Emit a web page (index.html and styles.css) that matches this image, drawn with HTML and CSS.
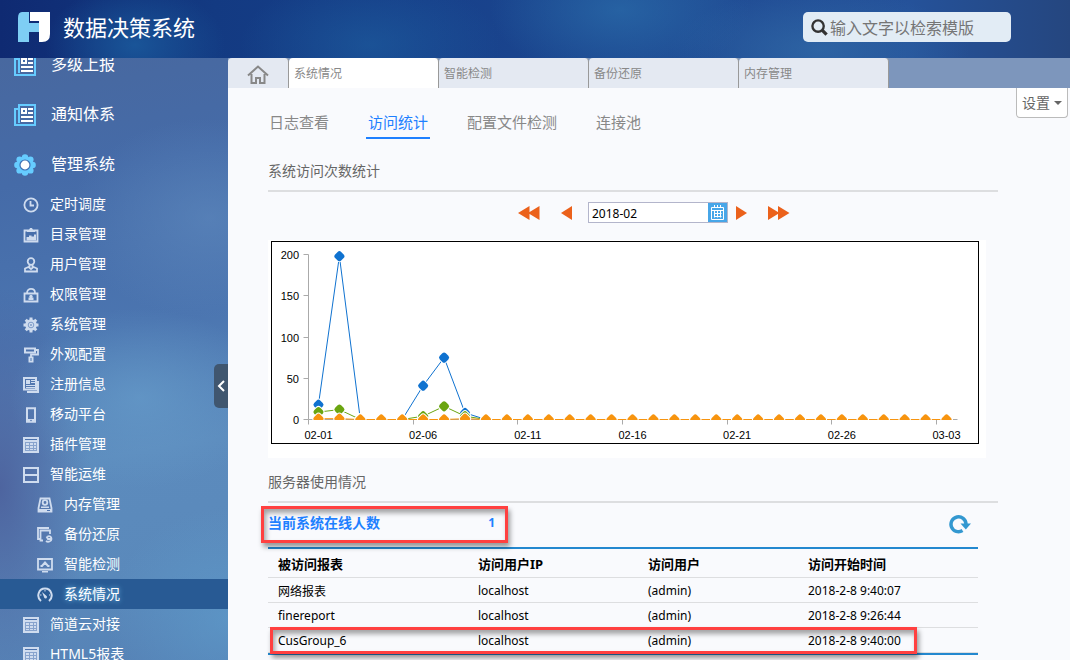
FILE: index.html
```html
<!DOCTYPE html>
<html lang="zh-CN">
<head>
  <meta charset="UTF-8">
  <meta name="viewport" content="width=device-width, initial-scale=1.0">
  <title>数据决策系统</title>
  <link rel="stylesheet" href="styles.css">
</head>
<body>
  <svg class="sprite" aria-hidden="true">
    <symbol id="i-news" viewBox="0 0 22 22">
      <path d="M5 1h16v20H1V5h4zM5 5v14" fill="none" stroke="#66ccff" stroke-width="2"/>
      <path d="M7 4h6v6H7zM14 4h5v2h-5zM14 8h5v2h-5zM7 12h12v2H7zM7 16h12v2H7z" fill="#fff"/>
      <path d="M9 6h2v2H9z" fill="#456fab"/>
    </symbol>
    <symbol id="i-flower" viewBox="0 0 22 22">
      <g fill="#66ccff">
        <circle cx="11" cy="3.400" r="3.200"/><circle cx="16.400" cy="5.600" r="3.200"/><circle cx="18.600" cy="11" r="3.200"/><circle cx="16.400" cy="16.400" r="3.200"/>
        <circle cx="11" cy="18.600" r="3.200"/><circle cx="5.600" cy="16.400" r="3.200"/><circle cx="3.400" cy="11" r="3.200"/><circle cx="5.600" cy="5.600" r="3.200"/>
        <circle cx="11" cy="11" r="7"/>
      </g>
      <circle cx="11" cy="11" r="5.600" fill="#3f70b5"/>
      <circle cx="11" cy="11" r="4.400" fill="#fff"/>
    </symbol>
    <symbol id="i-clock" viewBox="0 0 16 16">
      <circle cx="8" cy="8" r="6.600" class="line thick"/><path d="M7.500 4v4.500H11" class="line thick"/>
    </symbol>
    <symbol id="i-board" viewBox="0 0 16 16">
      <path d="M1.500 3.500h13v11h-13z" class="line thick"/><path d="M4 5V3h2l1-2h2l1 2h2v2zM3.500 10H6v3.500H3.500zM6 8.500h2.500v5H6zM8.500 9.500H11v4H8.500zM11 7.500h2v6h-2z" class="solid"/>
    </symbol>
    <symbol id="i-user" viewBox="0 0 16 16">
      <circle cx="8" cy="4.500" r="3.300" class="line thick"/><path d="M6.500 8v1.500L2 11.500v3h12v-3L9.500 9.500V8M5.500 10L8 12l2.500-2" class="line thick"/>
    </symbol>
    <symbol id="i-lock" viewBox="0 0 16 16">
      <path d="M1.500 6.500h13v8h-13zM4 6C4 .5 12 .5 12 6" class="line thick"/><circle cx="8" cy="9.500" r="1.700" class="solid"/><path d="M5.500 10.500h5V13h-5z" class="solid"/>
    </symbol>
    <symbol id="i-gear" viewBox="0 0 16 16">
      <path d="M8 .5v15M.5 8h15M2.700 2.700l10.600 10.600M13.300 2.700L2.700 13.300" class="line teeth"/><circle cx="8" cy="8" r="5.800" class="solid"/>
      <circle cx="8" cy="8" r="2.800" fill="none" stroke="#7f9cc9"/><circle cx="8" cy="8" r="1" fill="#7f9cc9"/>
    </symbol>
    <symbol id="i-roller" viewBox="0 0 16 16">
      <path d="M2 1.500h10v4H2z" class="line fat"/><path d="M12 3h3v4.500H8V10" class="line thick"/><path d="M5.500 9.500h5V15.500h-5z" class="solid"/><path d="M7.500 11h1v3h-1z" fill="#4d78b2"/>
    </symbol>
    <symbol id="i-paper" viewBox="0 0 16 16">
      <path d="M1 1h12v11.500H1z" class="line fat"/><path d="M14 4h2v12H4v-2h10z" class="solid"/><path d="M3 3h4v4H3zM8 3h4v1H8zM8 5h4v1H8zM3 8h9v1H3zM3 10h9v1H3z" class="solid"/>
    </symbol>
    <symbol id="i-phone" viewBox="0 0 16 16">
      <path d="M4 1.200h8v13.600H4z" class="line fat"/><path d="M4 12h8v3H4z" class="solid"/><circle cx="8" cy="13.500" r=".8" fill="#5278b0"/>
    </symbol>
    <symbol id="i-form" viewBox="0 0 16 16">
      <path d="M0 0h16v16H0z" class="solid"/><path d="M2 2h12v1H2z" fill="#4d73ae"/><path d="M2 5h12v9H2z" fill="#87a3cd"/><path d="M3 6h3v2H3zM7 6h3v2H7zM11 6h2v2h-2zM3 9h3v2H3zM7 9h3v2H7zM11 9h2v2h-2zM3 12h3v1H3zM7 12h3v1H7zM11 12h2v1h-2z" class="solid"/>
    </symbol>
    <symbol id="i-ops" viewBox="0 0 16 16">
      <path d="M1 1h14v14H1zM1 8h14" class="line fat"/>
    </symbol>
    <symbol id="i-disk" viewBox="0 0 16 16">
      <path d="M3.500 1.500h9l2 9.500v3.500h-13V11z" class="line thick"/><circle cx="8" cy="5.500" r="2.300" class="line thick"/><path d="M4 9.500h8V11H4zM1.500 12h13v3h-13z" class="solid"/><path d="M10 13h3v1h-3z" fill="#4d73ae"/>
    </symbol>
    <symbol id="i-copy" viewBox="0 0 16 16">
      <path d="M12 1H1v11h3" class="line thick"/><path d="M6 13.500H3.500V3.500h9.500V7" class="line thick"/><path d="M9.500 9.500l1.500 2.500h3.500M9 14c2 1.500 5.500.500 5.500-2s-2-3.500-4-2.500" class="line thick"/>
    </symbol>
    <symbol id="i-screen" viewBox="0 0 16 16">
      <path d="M1 2h14v10.500H1z" class="line thick"/><path d="M3.500 9H5l3-3.500L11 9h1.500" class="line fat"/><path d="M5 14h6v1.500H5z" class="solid"/>
    </symbol>
    <symbol id="i-gauge" viewBox="0 0 16 16">
      <path d="M4 14C-1 10 1.500 1.500 8 1.500S17 10 12 14" class="line fat"/><path d="M5 5l4 3.500a1.500 1.500 0 1 1-2 1.500z" class="solid"/><path d="M3 8h1.500M8 3v1.500M12 8h1" class="line"/>
    </symbol>
  </svg>

  <header class="header">
    <svg class="logo" viewBox="0 0 32 30" aria-hidden="true">
      <path d="M4 0h7v11h11v9H11v10H0V6Q0 0 4 0z" fill="#7ecef4"/>
      <path d="M12 0h20v22q0 8-8 8h-3V9H12z" fill="#fff"/>
    </svg>
    <h1 class="brand">数据决策系统</h1>
    <form class="search">
      <svg viewBox="0 0 18 18" aria-hidden="true"><circle cx="7.500" cy="7.500" r="6" fill="none" stroke="#333" stroke-width="2.500"/><path d="M12 12l4.500 4.500" stroke="#333" stroke-width="3.500"/></svg>
      <input type="text" aria-label="检索模版" placeholder="输入文字以检索模版">
    </form>
  </header>

  <div class="layout">
    <aside class="sidebar">
      <nav class="menu">
        <a class="item top" href="#"><svg><use href="#i-news"/></svg>多级上报</a>
        <a class="item top" href="#"><svg><use href="#i-news"/></svg>通知体系</a>
        <a class="item top" href="#"><svg><use href="#i-flower"/></svg>管理系统</a>
        <a class="item" href="#"><svg><use href="#i-clock"/></svg>定时调度</a>
        <a class="item" href="#"><svg><use href="#i-board"/></svg>目录管理</a>
        <a class="item" href="#"><svg><use href="#i-user"/></svg>用户管理</a>
        <a class="item" href="#"><svg><use href="#i-lock"/></svg>权限管理</a>
        <a class="item" href="#"><svg><use href="#i-gear"/></svg>系统管理</a>
        <a class="item" href="#"><svg><use href="#i-roller"/></svg>外观配置</a>
        <a class="item" href="#"><svg><use href="#i-paper"/></svg>注册信息</a>
        <a class="item" href="#"><svg><use href="#i-phone"/></svg>移动平台</a>
        <a class="item" href="#"><svg><use href="#i-form"/></svg>插件管理</a>
        <a class="item" href="#"><svg><use href="#i-ops"/></svg>智能运维</a>
        <a class="item sub" href="#"><svg><use href="#i-disk"/></svg>内存管理</a>
        <a class="item sub" href="#"><svg><use href="#i-copy"/></svg>备份还原</a>
        <a class="item sub" href="#"><svg><use href="#i-screen"/></svg>智能检测</a>
        <a class="item sub active" href="#"><svg><use href="#i-gauge"/></svg>系统情况</a>
        <a class="item" href="#"><svg><use href="#i-form"/></svg>简道云对接</a>
        <a class="item" href="#"><svg><use href="#i-form"/></svg>HTML5报表</a>
      </nav>
      <button class="collapse" type="button" aria-label="收起菜单">
        <svg viewBox="0 0 8 12"><path d="M7 1L2 6l5 5" fill="none" stroke="#fff" stroke-width="2"/></svg>
      </button>
    </aside>

    <main class="main">
      <nav class="tabs">
        <a class="tab home" href="#" aria-label="首页">
          <svg viewBox="0 0 22 19"><path d="M1 10.500L11 1.500l10 9M4.500 9v9h4.500v-5h4v5h4.500V9" fill="none" stroke="#888" stroke-width="2"/></svg>
        </a>
        <a class="tab current" href="#">系统情况</a>
        <a class="tab" href="#">智能检测</a>
        <a class="tab" href="#">备份还原</a>
        <a class="tab" href="#">内存管理</a>
      </nav>
      <button class="settings" type="button">设置<span class="caret"></span></button>

      <div class="content">
        <nav class="subtabs">
          <a href="#">日志查看</a>
          <a class="current" href="#">访问统计</a>
          <a href="#">配置文件检测</a>
          <a href="#">连接池</a>
        </nav>

        <h2 class="title">系统访问次数统计</h2>
        <div class="pager">
          <div class="arrows">
            <button type="button" aria-label="上一年"><svg width="22" height="14"><path d="M0 7L11.500 0v14zM10 7l11.500-7v14z"/></svg></button>
            <button type="button" aria-label="上一月"><svg width="11" height="14"><path d="M0 7l11-7v14z"/></svg></button>
          </div>
          <div class="date">
            <input type="text" aria-label="月份" value="2018-02">
            <button type="button" aria-label="选择月份">
              <svg width="15" height="15" fill="none" stroke="#fff"><path d="M1.500 2.500h12v12h-12zM1.500 5.500h12M4 8.500h7.500M4 11.500h7.500M4.500 5.500v7M7.500 5.500v7M10.500 5.500v7M4.500 0v3M7.500 0v3M10.500 0v3"/></svg>
            </button>
          </div>
          <div class="arrows">
            <button type="button" aria-label="下一月"><svg width="11" height="14"><path d="M11 7L0 0v14z"/></svg></button>
            <button type="button" aria-label="下一年"><svg width="22" height="14"><path d="M11.500 7L0 0v14zM21.500 7L10 0v14z"/></svg></button>
          </div>
        </div>

        <div class="chart">
          <svg id="visits" viewBox="0 0 708 203" role="img" aria-label="系统访问次数统计"></svg>
        </div>

        <h2 class="title">服务器使用情况</h2>
        <div class="server">
          <div class="online">
            <div class="count callout">当前系统在线人数<span>1</span></div>
            <button class="refresh" type="button" aria-label="刷新">
              <svg viewBox="0 0 22 20"><path d="M13.500 16.600A7.500 7.500 0 1 1 17 10" fill="none" stroke="#3398d0" stroke-width="3.500"/><path d="M11.500 9.500H22L16.800 15.500z" fill="#3398d0"/></svg>
            </button>
          </div>
          <table>
            <thead>
              <tr><th class="c-report">被访问报表</th><th class="c-ip">访问用户IP</th><th class="c-user">访问用户</th><th>访问开始时间</th></tr>
            </thead>
            <tbody>
              <tr><td>网络报表</td><td>localhost</td><td>(admin)</td><td>2018-2-8 9:40:07</td></tr>
              <tr><td>finereport</td><td>localhost</td><td>(admin)</td><td>2018-2-8 9:26:44</td></tr>
              <tr><td>CusGroup_6</td><td>localhost</td><td>(admin)</td><td>2018-2-8 9:40:00</td></tr>
            </tbody>
          </table>
          <div class="row-mark callout"></div>
        </div>
      </div>
    </main>
  </div>

  <script src="chart.js"></script>
</body>
</html>
```
FILE: styles.css
```css
* {
  box-sizing: border-box;
}
body {
  margin: 0;
  height: 100vh;
  display: flex;
  flex-direction: column;
  overflow: hidden;
  font-family: "Noto Sans", "Noto Sans CJK SC", sans-serif;
  font-size: 12px;
  background: #f9fafd;
}
a {
  text-decoration: none;
  color: inherit;
}
button {
  padding: 0;
  border: 0;
  background: none;
  font: inherit;
  cursor: pointer;
}
svg {
  display: block;
}
.sprite {
  position: absolute;
  width: 0;
  height: 0;
}
.line {
  fill: none;
  stroke: #cfdcef;
}
.thick {
  stroke-width: 1.8;
}
.fat {
  stroke-width: 2;
}
.teeth {
  stroke-width: 3;
}
.solid {
  fill: #cfdcef;
}

/* header */
.header {
  flex: none;
  height: 58px;
  display: flex;
  align-items: center;
  padding: 0 59px 4px 18px;
  background:
    radial-gradient(ellipse 90px 60px at 135px 45px, rgba(26, 88, 155, .9), transparent),
    radial-gradient(ellipse 130px 70px at 370px 45px, rgba(30, 95, 160, .6), transparent),
    radial-gradient(ellipse 130px 70px at 620px 10px, rgba(42, 108, 170, .7), transparent),
    radial-gradient(ellipse 150px 60px at 820px 50px, rgba(50, 108, 168, .7), transparent),
    linear-gradient(90deg, #0f2a72, #133a82 20%, #17408a 40%, #1e4a92 60%, #25529a 85%, #25467f);
}
.logo {
  width: 32px;
  height: 30px;
}
.brand {
  margin: 0 auto 0 13px;
  font-size: 22px;
  line-height: 30px;
  font-weight: normal;
  color: #fff;
}
.search {
  display: flex;
  align-items: center;
  width: 208px;
  height: 30px;
  padding: 0 8px;
  border-radius: 5px;
  background: #e2ecf5;
}
.search svg {
  flex: none;
  width: 17px;
  height: 17px;
}
.search input {
  flex: 1;
  min-width: 0;
  height: 30px;
  padding: 2px 0 0 2px;
  border: 0;
  background: none;
  font: inherit;
  font-size: 16px;
}
.search input::placeholder {
  color: #757575;
}

.layout {
  flex: 1;
  min-height: 0;
  display: flex;
}

/* sidebar */
.sidebar {
  flex: none;
  position: relative;
  width: 228px;
  overflow: hidden;
  background:
    radial-gradient(ellipse 130px 90px at 140px 340px, rgba(105, 160, 205, .6), transparent),
    radial-gradient(ellipse 90px 200px at 0 430px, rgba(76, 96, 156, .9), transparent),
    radial-gradient(ellipse 120px 110px at 228px 560px, rgba(95, 158, 205, .6), transparent),
    radial-gradient(ellipse 140px 100px at 210px 160px, rgba(95, 138, 190, .6), transparent),
    linear-gradient(170deg, #48689f, #456ba8 20%, #4b75b0 45%, #5c8bbd 65%, #5a89bb 85%, #5581b5);
}
/* the list is scrolled a little past its first entry */
.menu {
  margin-top: -19px;
}
.item {
  display: flex;
  align-items: center;
  gap: 11px;
  height: 30px;
  padding: 0 0 2px 23px;
  font-size: 14px;
  color: #fff;
}
.item svg {
  width: 16px;
  height: 16px;
  margin-top: 4px;
}
.item.top {
  gap: 15px;
  height: 50px;
  padding-left: 14px;
  font-size: 16px;
}
.item.top svg {
  width: 22px;
  height: 22px;
}
.item.sub {
  padding-left: 37px;
}
.item.active {
  background: #285a94;
  text-shadow: 0 0 5px #7fd0ff;
}
.collapse {
  position: absolute;
  right: 0;
  top: 306px;
  width: 14px;
  height: 44px;
  padding-left: 3px;
  border-radius: 5px 0 0 5px;
  background: #40566f;
}
.collapse svg {
  width: 8px;
  height: 12px;
}

/* main area */
.main {
  flex: 1;
  min-width: 0;
  position: relative;
}
.tabs {
  display: flex;
  height: 30px;
  background: #7d96bc;
}
.tab {
  width: 150px;
  padding-left: 5px;
  border-right: 1px solid #999;
  border-radius: 4px 4px 0 0;
  background: #e4e9f2;
  line-height: 32px;
  color: #888;
}
.tab.home {
  width: 61px;
  padding: 7px 0 0 19px;
}
.tab.home svg {
  width: 22px;
  height: 19px;
}
.tab.current {
  background: #fff;
}
.settings {
  position: absolute;
  right: 2px;
  top: 30px;
  display: flex;
  align-items: center;
  gap: 4px;
  height: 30px;
  padding: 0 5px 2px;
  border: 1px solid #bbb;
  border-top: 0;
  border-radius: 0 0 4px 4px;
  background: #fff;
  font-size: 14px;
  color: #666;
}
.caret {
  margin-top: 3px;
  border: 4px solid transparent;
  border-top-color: #666;
  border-bottom: 0;
}
.content {
  padding: 19px 72px 0 40px;
}
.subtabs {
  display: flex;
  gap: 35px;
  margin-left: -1px;
}
.subtabs a {
  height: 32px;
  padding: 0 2px;
  font-size: 15px;
  line-height: 30px;
  color: #888;
}
.subtabs .current {
  border-bottom: 2px solid #1e80ff;
  color: #1e80ff;
}
.title {
  margin: 0;
  height: 53px;
  padding-top: 22px;
  border-bottom: 2px solid #dddee0;
  font-size: 14px;
  line-height: 20px;
  font-weight: normal;
  color: #666;
}

.pager {
  display: flex;
  align-items: center;
  padding: 10px 0 0 250px;
}
.arrows {
  display: flex;
  gap: 21px;
  fill: #eb611b;
}
.date {
  display: flex;
  margin: 0 8px 0 16px;
  border: 1px solid #b3b5cb;
  background: #fff;
}
.date input {
  width: 119px;
  height: 19px;
  padding: 2px 3px 0;
  border: 0;
  background: none;
  font: inherit;
}
.date button {
  width: 19px;
  height: 19px;
  padding-left: 2px;
  background: #47a6e8;
}

.chart {
  margin: 17px 12px 0 0;
  padding: 1px 7px 14px 3px;
  background: #fff;
}
.chart svg {
  width: 100%;
}
.chart text {
  font-family: "Liberation Sans", sans-serif;
  font-size: 11px;
}
.chart + .title {
  height: 45px;
  padding-top: 14px;
}

.server {
  position: relative;
  margin-right: 20px;
}
.online {
  display: flex;
  align-items: center;
  justify-content: space-between;
  height: 44px;
  padding: 0 7px 2px 0;
}
.callout {
  border: 3px solid #ff4040;
  box-shadow: 2px 4px 5px rgba(0, 0, 0, .4), inset 2px 4px 5px rgba(0, 0, 0, .35);
}
.count {
  display: flex;
  justify-content: space-between;
  width: 247px;
  height: 37px;
  margin-left: -7px;
  padding: 0 10px 0 4px;
  font-size: 14px;
  line-height: 28px;
  font-weight: bold;
  color: #1e80ff;
}
.count span {
  font-size: 12px;
}
.refresh svg {
  width: 22px;
  height: 20px;
}
table {
  width: 100%;
  border-spacing: 0;
  table-layout: fixed;
  border-top: 2px solid #2388cf;
  border-bottom: 2px solid #2388cf;
}
th, td {
  height: 25px;
  padding: 1px 10px 0;
  border-bottom: 1px solid #dddee0;
  text-align: left;
}
th {
  height: 29px;
  font-size: 13px;
}
.c-report {
  width: 200px;
}
.c-ip {
  width: 170px;
}
.c-user {
  width: 160px;
}
.row-mark {
  position: absolute;
  left: 2px;
  right: 61px;
  bottom: 1px;
  height: 27px;
}
```
FILE: chart.js
```js
const svg = document.getElementById('visits');
const left = 37.5, right = 686.5, top0 = 13.5, base = 178.5;
const days = 31, max = 200;
const step = (right - left) / days;

const series = [
  { color: '#0f72d0', values: [18, 198, 0, 0, 0, 41, 75, 8] },
  { color: '#6aa510', values: [9, 12, 0, 0, 0, 4, 16, 4] },
  { color: '#f7940f', values: [1, 1, 0, 0, 0, 0, 0, 1] }
];
const labels = ['02-01', '02-06', '02-11', '02-16', '02-21', '02-26', '03-03'];

const px = i => left + step * (i + 0.5) - 0.5;
const py = v => base - v * (base - top0) / max;

let out = '<rect x=".5" y=".5" width="707" height="202" fill="#fff" stroke="#000"/>';
out += '<clipPath id="plot"><rect x="30" y="0" width="670" height="179"/></clipPath>';

// axes
let axis = `M${left} ${top0}V${base}H${right}`;
for (let v = 0; v <= max; v += 50) {
  const y = Math.floor(py(v)) + 0.5;
  axis += `M${left - 5} ${y}h5`;
  out += `<text x="28" y="${y + 4}" text-anchor="end">${v}</text>`;
}
labels.forEach((label, n) => {
  axis += `M${Math.floor(left + step * n * 5) + 0.5} ${base}v5`;
  out += `<text x="${px(n * 5)}" y="198" text-anchor="middle">${label}</text>`;
});
out += `<path d="${axis}" fill="none" stroke="#aaa"/>`;

// lines, then markers with a white ring
out += '<g clip-path="url(#plot)">';
series.forEach(s => {
  const pts = [];
  for (let i = 0; i < days; i++) {
    pts.push([px(i), py(s.values[i] || 0)]);
  }
  out += `<polyline points="${pts.join(' ')}" fill="none" stroke="${s.color}"/>`;
  pts.forEach(([x, y]) => {
    const d = `M${x - 2.5} ${y}l2.5-2.5 2.5 2.5-2.5 2.500z`;
    out += `<path d="${d}" fill="#fff" stroke="#fff" stroke-width="7" stroke-linejoin="round"/>`;
    out += `<path d="${d}" fill="${s.color}" stroke="${s.color}" stroke-width="5" stroke-linejoin="round"/>`;
  });
});
out += '</g>';

svg.innerHTML = out;
```
